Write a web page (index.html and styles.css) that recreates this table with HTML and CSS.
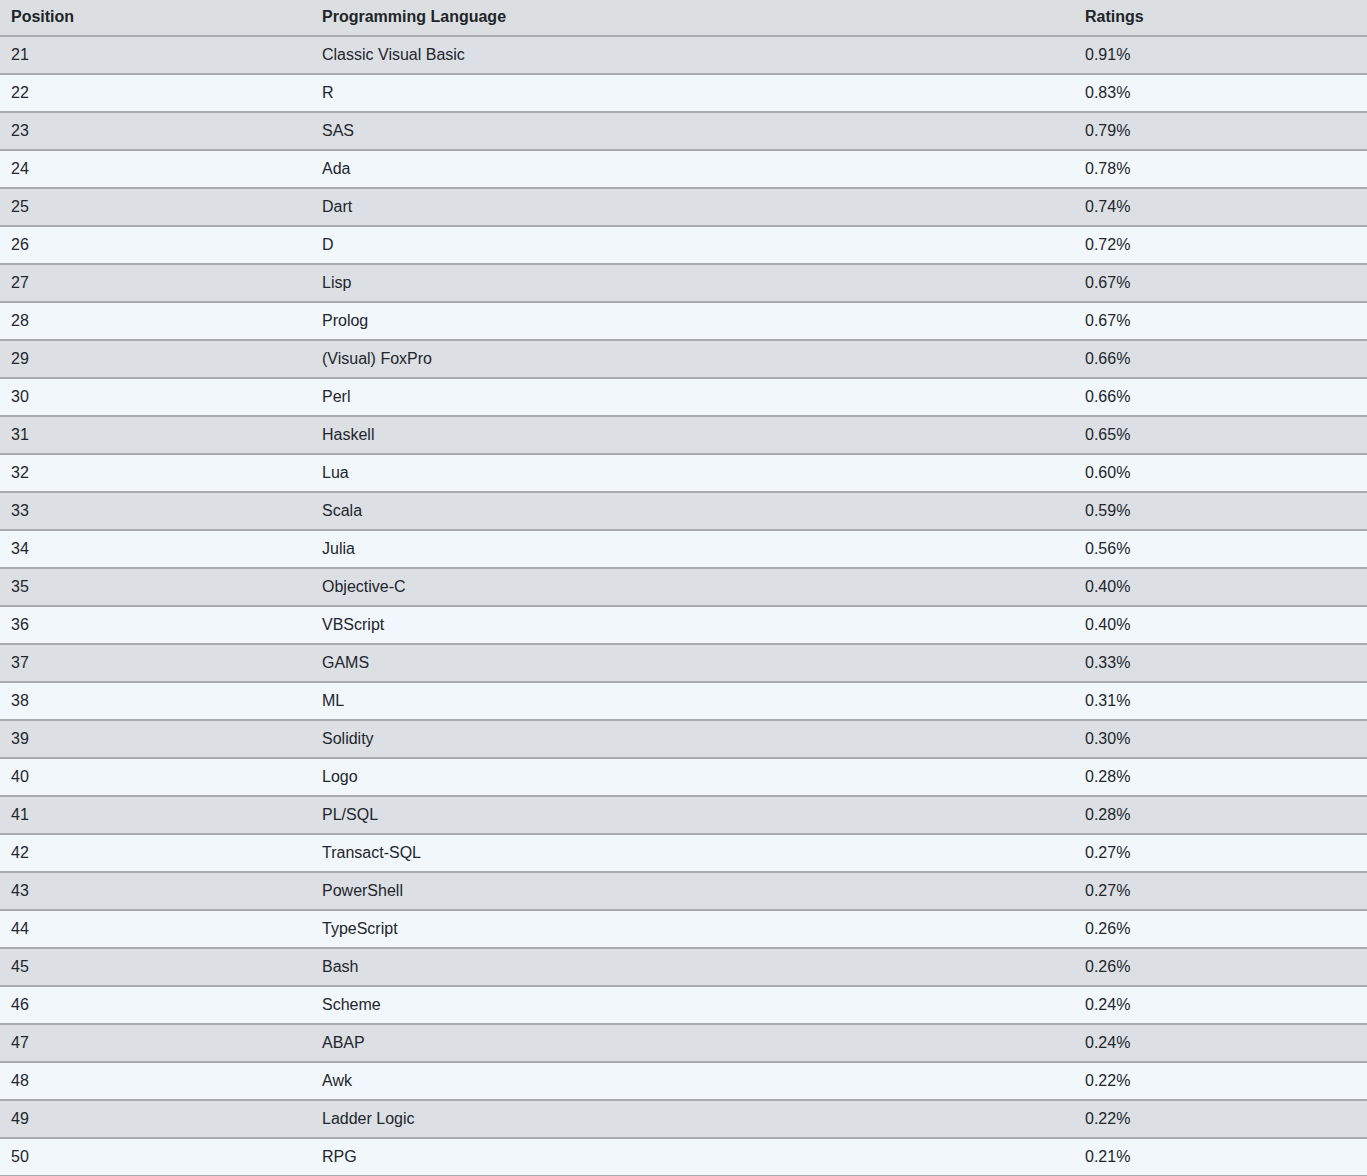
FILE: index.html
```html
<!DOCTYPE html>
<html lang="en">
  <head>
    <meta charset="UTF-8" />
    <meta name="viewport" content="width=device-width, initial-scale=1.0" />
    <title>TIOBE 21-50</title>
    <link rel="stylesheet" href="styles.css">
  </head>
  <body>
    <table class="ranking">
      <colgroup>
        <col class="col-pos" />
        <col class="col-lang" />
        <col class="col-rate" />
      </colgroup>
      <thead>
        <tr>
          <th>Position</th>
          <th>Programming Language</th>
          <th>Ratings</th>
        </tr>
      </thead>
      <tbody id="rows"></tbody>
    </table>

    <script>
      const languages = [
        ["21", "Classic Visual Basic", "0.91%"],
        ["22", "R", "0.83%"],
        ["23", "SAS", "0.79%"],
        ["24", "Ada", "0.78%"],
        ["25", "Dart", "0.74%"],
        ["26", "D", "0.72%"],
        ["27", "Lisp", "0.67%"],
        ["28", "Prolog", "0.67%"],
        ["29", "(Visual) FoxPro", "0.66%"],
        ["30", "Perl", "0.66%"],
        ["31", "Haskell", "0.65%"],
        ["32", "Lua", "0.60%"],
        ["33", "Scala", "0.59%"],
        ["34", "Julia", "0.56%"],
        ["35", "Objective-C", "0.40%"],
        ["36", "VBScript", "0.40%"],
        ["37", "GAMS", "0.33%"],
        ["38", "ML", "0.31%"],
        ["39", "Solidity", "0.30%"],
        ["40", "Logo", "0.28%"],
        ["41", "PL/SQL", "0.28%"],
        ["42", "Transact-SQL", "0.27%"],
        ["43", "PowerShell", "0.27%"],
        ["44", "TypeScript", "0.26%"],
        ["45", "Bash", "0.26%"],
        ["46", "Scheme", "0.24%"],
        ["47", "ABAP", "0.24%"],
        ["48", "Awk", "0.22%"],
        ["49", "Ladder Logic", "0.22%"],
        ["50", "RPG", "0.21%"]
      ];

      const tbody = document.getElementById("rows");
      languages.forEach(function(lang) {
        const tr = document.createElement("tr");
        lang.forEach(function(value) {
          const td = document.createElement("td");
          td.textContent = value;
          tr.appendChild(td);
        });
        tbody.appendChild(tr);
      });
    </script>
  </body>
</html>
```

FILE: styles.css
```css
body {
  margin: 0;
  padding: 0;
  font-family: "Liberation Sans", Arial, sans-serif;
  font-size: 16px;
  color: #22262d;
  background-color: #ffffff;
}

.ranking {
  width: 100%;
  border-collapse: collapse;
  table-layout: fixed;
}

.col-pos {
  width: 311px;
}

.col-lang {
  width: 763px;
}

.col-rate {
  width: 293px;
}

.ranking th {
  text-align: left;
  font-weight: bold;
  color: #212529;
  line-height: 18px;
  padding: 8px 11px 9px;
  background-color: #dcdfe2;
  border-bottom: 2px solid #a9abae;
}

.ranking td {
  line-height: 18px;
  padding: 9px 11px;
  border-bottom: 2px solid #a9abae;
  background-color: #f2f7fb;
}

.ranking tbody tr:nth-child(odd) td {
  background-color: #dcdfe3;
}
```
